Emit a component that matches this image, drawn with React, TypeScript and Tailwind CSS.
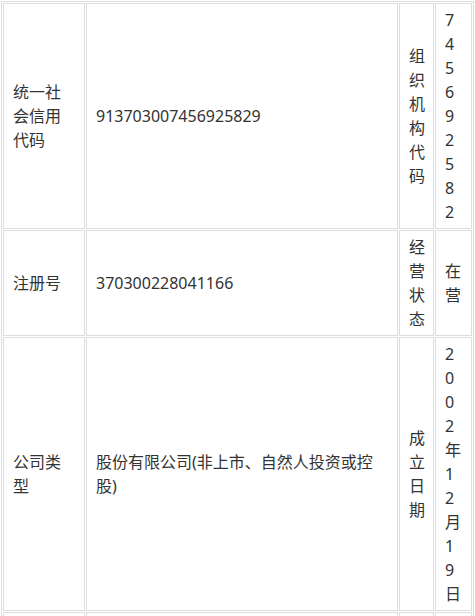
import React from "react";

const cell =
  "border border-[#dddddd] align-middle px-[9px] py-[4px] text-[16px] leading-[24px] text-[#333333] break-all";

export default function App() {
  return (
    <div
      className="bg-white w-[475px] h-[616px] overflow-hidden pl-px pt-px"
      style={{ fontFamily: '"Noto Sans", "Noto Sans CJK SC", sans-serif' }}
    >
      <table className="table-fixed border-separate border-spacing-[1px] border border-[#dddddd] w-[473px]">
        <colgroup>
          <col className="w-[82px]" />
          <col className="w-[312px]" />
          <col className="w-[35px]" />
          <col className="w-[37px]" />
        </colgroup>
        <tbody>
          <tr>
            <td className={cell}>统一社会信用代码</td>
            <td className={cell}>913703007456925829</td>
            <td className={cell}>组织机构代码</td>
            <td className={cell}>745692582</td>
          </tr>
          <tr>
            <td className={cell}>注册号</td>
            <td className={cell}>370300228041166</td>
            <td className={cell}>经营状态</td>
            <td className={cell}>在营</td>
          </tr>
          <tr>
            <td className={cell}>公司类型</td>
            <td className={cell}>股份有限公司(非上市、自然人投资或控股)</td>
            <td className={cell}>成立日期</td>
            <td className={cell}>2002年12月19日</td>
          </tr>
          <tr>
            <td className={`${cell} h-[40px]`}></td>
            <td className={`${cell} h-[40px]`}></td>
            <td className={`${cell} h-[40px]`}></td>
            <td className={`${cell} h-[40px]`}></td>
          </tr>
        </tbody>
      </table>
    </div>
  );
}
